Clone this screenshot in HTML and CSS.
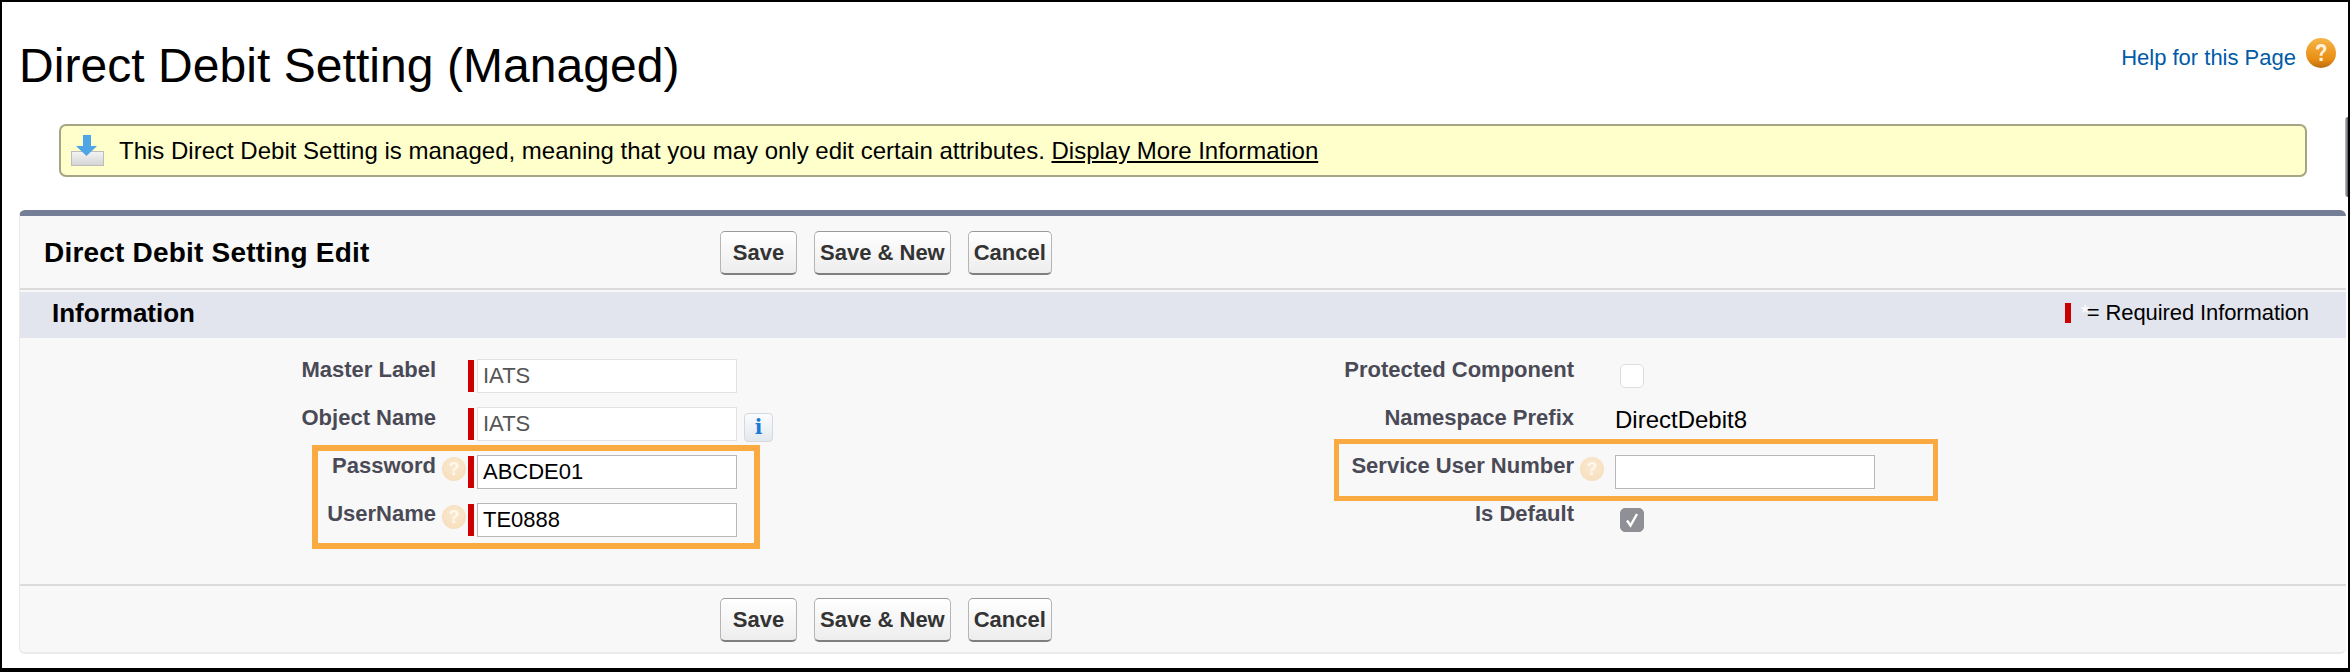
FILE: index.html
```html
<!DOCTYPE HTML>
<html>
  <head>
    <meta http-equiv="content-type" content="text/html; charset=utf-8">
    <title>Direct Debit Setting (Managed)</title>
    <link rel="stylesheet" href="styles.css">
  </head>
  <body>
    <div class="frame">
      <div class="page-head">
        <h1>Direct Debit Setting (Managed)</h1>
        <a class="help-link" href="#">Help for this Page
          <svg class="help-icon" width="30" height="30" viewBox="0 0 32 32">
            <defs>
              <linearGradient id="helpFill" x1="0" y1="0" x2="0" y2="1">
                <stop offset="0" stop-color="#f6b44a"/>
                <stop offset="0.7" stop-color="#e98f14"/>
                <stop offset="1" stop-color="#b96c10"/>
              </linearGradient>
            </defs>
            <circle cx="16" cy="16" r="16" fill="url(#helpFill)"/>
            <path d="M10.500 12c0-3.500 2.300-5.500 5.700-5.500 3.300 0 5.500 2 5.500 4.800 0 3.900-4 4-4 7.500h-3.200c0-4.700 3.800-4.900 3.800-7.200 0-1.100-.8-1.900-2.100-1.900-1.400 0-2.300 1-2.300 2.500z M14.400 21h3.400v3.500h-3.400z" fill="#fff2d8"/>
          </svg>
        </a>
      </div>

      <div class="message">
        <svg class="message-icon" width="33" height="31" viewBox="0 0 33 31">
          <defs>
            <linearGradient id="trayFill" x1="0" y1="0" x2="0" y2="1">
              <stop offset="0" stop-color="#f4f4f4"/>
              <stop offset="1" stop-color="#d4d4d4"/>
            </linearGradient>
          </defs>
          <rect x="0.500" y="16.500" width="32" height="14" fill="url(#trayFill)" stroke="#bdbdbd"/>
          <path d="M12 0h8v11h6L15.500 21 5 11h7z" fill="#4fa6e6"/>
        </svg>
        <span>This Direct Debit Setting is managed, meaning that you may only edit certain attributes. <a href="#">Display More Information</a></span>
      </div>
      <div class="edge-shadow"></div>

      <div class="card">
        <div class="button-bar bar-top">
          <h2>Direct Debit Setting Edit</h2>
          <div class="buttons">
            <a class="btn btn-save" href="#">Save</a>
            <a class="btn" href="#">Save &amp; New</a>
            <a class="btn" href="#">Cancel</a>
          </div>
        </div>

        <div class="section-head">
          <h3>Information</h3>
          <div class="legend"><i class="req"></i><span class="star">*</span>= Required Information</div>
        </div>

        <div class="form">
          <div class="col">
            <div class="row">
              <label>Master Label</label>
              <div class="field"><i class="req"></i><div class="input readonly">IATS</div></div>
            </div>
            <div class="row">
              <label>Object Name</label>
              <div class="field">
                <i class="req"></i><div class="input readonly">IATS</div>
                <span class="info-btn">i</span>
              </div>
            </div>
            <div class="row">
              <label>Password</label>
              <span class="hint">?</span>
              <div class="field"><i class="req"></i><div class="input">ABCDE01</div></div>
            </div>
            <div class="row">
              <label>UserName</label>
              <span class="hint">?</span>
              <div class="field"><i class="req"></i><div class="input">TE0888</div></div>
            </div>
          </div>

          <div class="col col-right">
            <div class="row">
              <label>Protected Component</label>
              <div class="field"><span class="check"></span></div>
            </div>
            <div class="row">
              <label>Namespace Prefix</label>
              <div class="field plain">DirectDebit8</div>
            </div>
            <div class="row">
              <label>Service User Number</label>
              <span class="hint">?</span>
              <div class="field"><div class="input"></div></div>
            </div>
            <div class="row">
              <label>Is Default</label>
              <div class="field">
                <span class="check checked">
                  <svg width="24" height="24" viewBox="0 0 24 24"><path d="M7 12.500l3.500 5L17 6" fill="none" stroke="#fff" stroke-width="2.400"/></svg>
                </span>
              </div>
            </div>
          </div>

          <div class="callout callout-left"></div>
          <div class="callout callout-right"></div>
        </div>

        <div class="button-bar bar-bottom">
          <div class="buttons">
            <a class="btn btn-save" href="#">Save</a>
            <a class="btn" href="#">Save &amp; New</a>
            <a class="btn" href="#">Cancel</a>
          </div>
        </div>
      </div>
    </div>
  </body>
</html>
```

FILE: styles.css
```css
html, body{margin:0px; padding:0px; background:#000;}
body{font-family:"Liberation Sans", Arial, sans-serif; color:#000; font-size:22px;}
a{color:inherit;}

.frame{position:relative; box-sizing:border-box; width:2346px; height:666px; margin:2px 2px 4px 2px; background:#fff; padding:0 0 0 17px; overflow:hidden;}

.page-head{display:flex; justify-content:space-between; height:122px; padding:0 12px 0 0;}
.page-head h1{margin:0; font-size:48px; font-weight:normal; line-height:56px; padding-top:36px; letter-spacing:0.05px;}
.help-link{display:flex; gap:10px; align-items:flex-start; color:#015ba7; text-decoration:none; line-height:26px; padding-top:43px; height:40px;}
.help-icon{margin-top:-7px;}

.message{display:flex; align-items:center; gap:15px; box-sizing:border-box; width:2248px; height:53px; margin:0 0 33px 40px; padding:0 0 0 10px; font-size:24px; background:#ffc; border:2px solid #a5a583; border-radius:7px;}
.message a{color:#000;}
.edge-shadow{position:absolute; right:0; top:115px; width:3px; height:80px; background:linear-gradient(to right, #c4c6ca, #4f5560); border-radius:3px 0 0 3px;}

.card{box-sizing:border-box; width:2327px; height:444px; background:#f8f8f8; border-top:6px solid #747e96; border-bottom:2px solid #eaeaea; border-left:1px solid #eaeaea; border-radius:6px;}

.button-bar{display:flex; align-items:center; box-sizing:border-box;}
.bar-top{height:74px; padding-top:2px; border-bottom:2px solid #dbdbdb;}
.bar-top h2{margin:0; width:700px; padding-left:24px; box-sizing:border-box; font-size:28px; font-weight:bold; letter-spacing:0.2px;}
.bar-bottom{height:68px; padding:2px 0 0 700px; border-top:2px solid #dbdbdb;}
.buttons{display:flex; gap:17px;}
.btn{display:block; box-sizing:border-box; height:44px; line-height:41px; padding:0 5px; text-align:center; font-size:22px; font-weight:bold; color:#333; text-decoration:none; background:linear-gradient(#fff, #ededed); border:1px solid #b5b5b5; border-bottom:2px solid #7f7f7f; border-top-color:#999; border-radius:5px;}
.btn-save{width:77px;}

.section-head{display:flex; justify-content:space-between; align-items:center; box-sizing:border-box; height:46px; margin-top:2px; padding:0 37px 3px 32px; background:#e3e5ee;}
.section-head h3{margin:0; font-size:26px; font-weight:bold;}
.legend{display:flex; align-items:center; margin-bottom:2px; letter-spacing:-0.1px;}
.legend .req{margin:0 10px 0 0; height:20px;}
.star{color:#fff; width:5px; margin-right:1px;}

.form{position:relative; display:flex; height:246px; padding-top:21px; box-sizing:border-box;}
.col{width:1035px;}
.row{position:relative; display:flex; height:48px;}
.row label{box-sizing:border-box; width:416px; text-align:right; font-weight:bold; color:#4a4a56; line-height:22px;}
.col-right .row label{width:519px;}
.field{display:flex; margin-left:32px; align-items:flex-start;}
.col-right .field{margin-left:41px;}
.field.plain{font-size:24px; line-height:26px;}
.req{display:block; width:6px; height:32px; margin-top:1px; margin-right:3px; background:#c00;}
.input{box-sizing:border-box; width:260px; height:34px; line-height:32px; padding-left:5px; background:#fff; border:1px solid #b8b8b8;}
.input.readonly{color:#555; border-color:#e2e2e2;}
.info-btn{display:block; box-sizing:border-box; width:29px; height:29px; margin:6px 0 0 7px; text-align:center; font:bold 20px/27px "DejaVu Serif", serif; color:#1a7bd6; background:linear-gradient(#fbfcfe, #e3e8ee); border:1px solid #d5d9de; border-radius:4px;}
.hint{position:absolute; left:422px; top:2px; width:24px; height:24px; border-radius:50%; background:radial-gradient(circle at 50% 40%, #f9e9d0, #f6dcb8); color:#fff8ec; font-weight:bold; font-size:18px; line-height:24px; text-align:center;}
.col-right .hint{left:525px;}
.check{display:block; box-sizing:border-box; width:24px; height:24px; margin:5px 0 0 5px; background:#fff; border:1px solid #ddd; border-radius:5px;}
.check.checked{background:#8f8f96; border-color:#8f8f96;}
.check svg{display:block; margin:-1px;}

.callout{position:absolute; box-sizing:border-box; border:6px solid #f9aa40; pointer-events:none;}
.callout-left{left:292px; top:107px; width:448px; height:104px;}
.callout-right{left:1314px; top:101px; width:604px; height:62px; border-width:5px;}
```
